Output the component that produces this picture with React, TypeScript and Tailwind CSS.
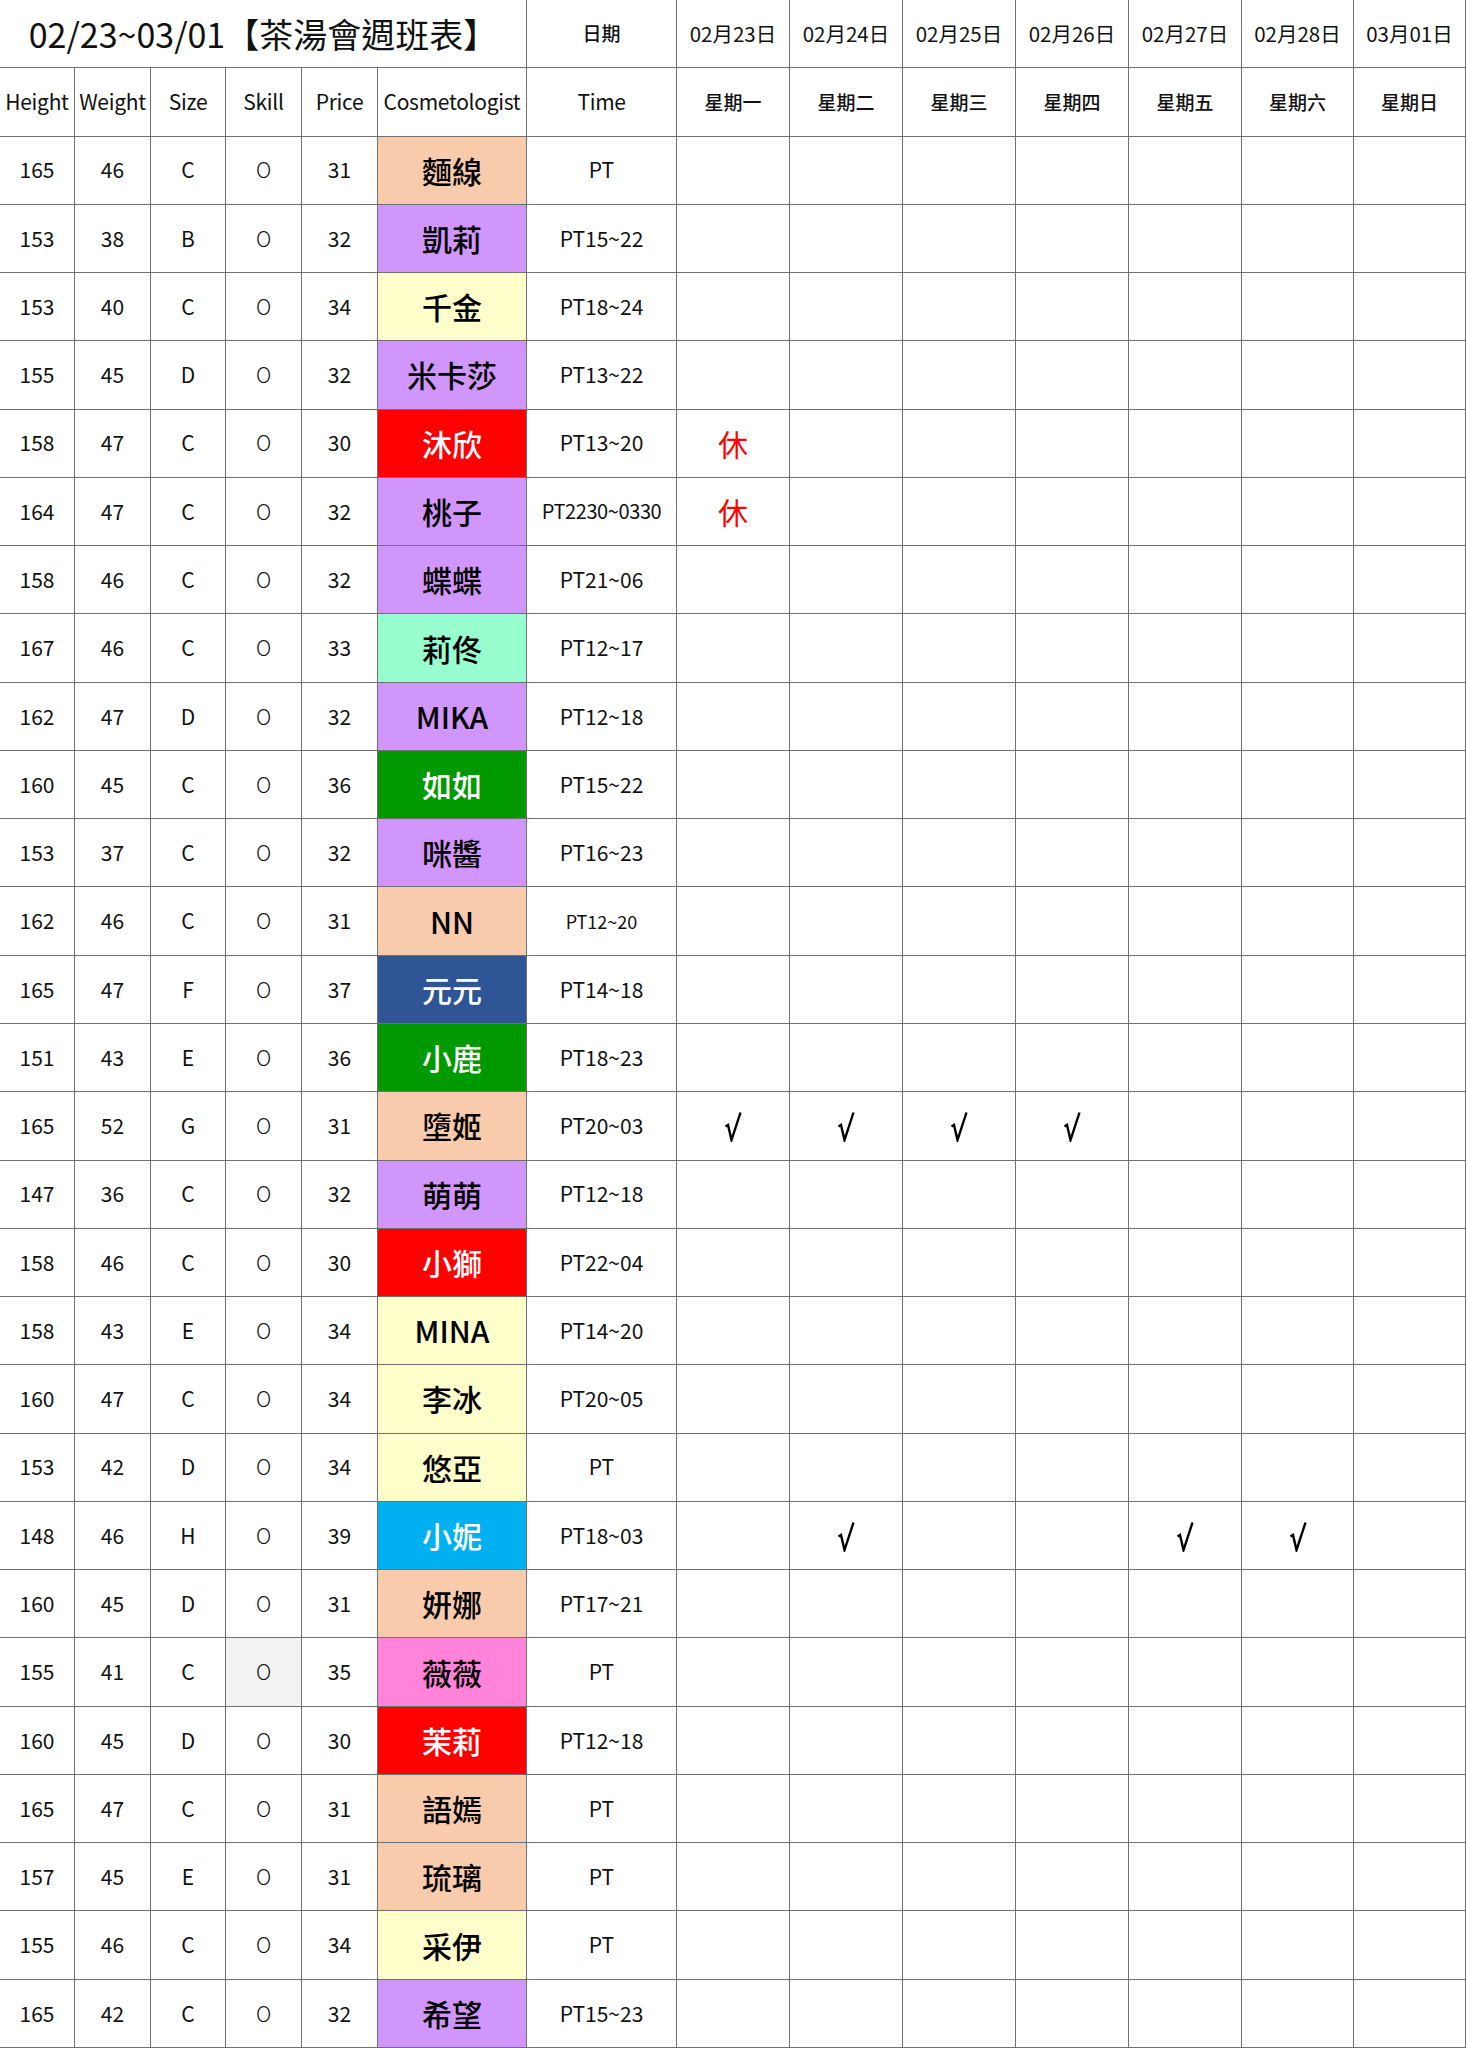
import React from "react";

type Row = {
  h: number;
  w: number;
  size: string;
  price: number;
  name: string;
  color: string;
  time: string;
  marks?: Record<number, string>;
  skillBg?: boolean;
  smallTime?: boolean;
};

// background + text colour for the name cell
const colors: Record<string, string> = {
  peach: "bg-[#f8cbad] text-black",
  purple: "bg-[#d196fb] text-black",
  yellow: "bg-[#ffffcc] text-black",
  red: "bg-[#ff0000] text-white",
  mint: "bg-[#99fecf] text-black",
  green: "bg-[#009900] text-white",
  blue: "bg-[#2f5597] text-white",
  cyan: "bg-[#00b0f0] text-white",
  pink: "bg-[#ff83d8] text-black",
};

const rows: Row[] = [
  { h: 165, w: 46, size: "C", price: 31, name: "麵線", color: "peach", time: "PT" },
  { h: 153, w: 38, size: "B", price: 32, name: "凱莉", color: "purple", time: "PT15~22" },
  { h: 153, w: 40, size: "C", price: 34, name: "千金", color: "yellow", time: "PT18~24" },
  { h: 155, w: 45, size: "D", price: 32, name: "米卡莎", color: "purple", time: "PT13~22" },
  { h: 158, w: 47, size: "C", price: 30, name: "沐欣", color: "red", time: "PT13~20", marks: { 0: "休" } },
  { h: 164, w: 47, size: "C", price: 32, name: "桃子", color: "purple", time: "PT2230~0330", marks: { 0: "休" } },
  { h: 158, w: 46, size: "C", price: 32, name: "蝶蝶", color: "purple", time: "PT21~06" },
  { h: 167, w: 46, size: "C", price: 33, name: "莉佟", color: "mint", time: "PT12~17" },
  { h: 162, w: 47, size: "D", price: 32, name: "MIKA", color: "purple", time: "PT12~18" },
  { h: 160, w: 45, size: "C", price: 36, name: "如如", color: "green", time: "PT15~22" },
  { h: 153, w: 37, size: "C", price: 32, name: "咪醬", color: "purple", time: "PT16~23" },
  { h: 162, w: 46, size: "C", price: 31, name: "NN", color: "peach", time: "PT12~20", smallTime: true },
  { h: 165, w: 47, size: "F", price: 37, name: "元元", color: "blue", time: "PT14~18" },
  { h: 151, w: 43, size: "E", price: 36, name: "小鹿", color: "green", time: "PT18~23" },
  { h: 165, w: 52, size: "G", price: 31, name: "墮姬", color: "peach", time: "PT20~03", marks: { 0: "√", 1: "√", 2: "√", 3: "√" } },
  { h: 147, w: 36, size: "C", price: 32, name: "萌萌", color: "purple", time: "PT12~18" },
  { h: 158, w: 46, size: "C", price: 30, name: "小獅", color: "red", time: "PT22~04" },
  { h: 158, w: 43, size: "E", price: 34, name: "MINA", color: "yellow", time: "PT14~20" },
  { h: 160, w: 47, size: "C", price: 34, name: "李冰", color: "yellow", time: "PT20~05" },
  { h: 153, w: 42, size: "D", price: 34, name: "悠亞", color: "yellow", time: "PT" },
  { h: 148, w: 46, size: "H", price: 39, name: "小妮", color: "cyan", time: "PT18~03", marks: { 1: "√", 4: "√", 5: "√" } },
  { h: 160, w: 45, size: "D", price: 31, name: "妍娜", color: "peach", time: "PT17~21" },
  { h: 155, w: 41, size: "C", price: 35, name: "薇薇", color: "pink", time: "PT", skillBg: true },
  { h: 160, w: 45, size: "D", price: 30, name: "茉莉", color: "red", time: "PT12~18" },
  { h: 165, w: 47, size: "C", price: 31, name: "語嫣", color: "peach", time: "PT" },
  { h: 157, w: 45, size: "E", price: 31, name: "琉璃", color: "peach", time: "PT" },
  { h: 155, w: 46, size: "C", price: 34, name: "采伊", color: "yellow", time: "PT" },
  { h: 165, w: 42, size: "C", price: 32, name: "希望", color: "purple", time: "PT15~23" },
];

const dates = ["02月23日", "02月24日", "02月25日", "02月26日", "02月27日", "02月28日", "03月01日"];
const weekdays = ["星期一", "星期二", "星期三", "星期四", "星期五", "星期六", "星期日"];

const cell = "flex items-center justify-center border-r border-b border-[#707070] overflow-hidden whitespace-nowrap";

// the spreadsheet's check mark: short tick on the left, tall stroke up to the right
function Check() {
  return (
    <svg width="18" height="31" viewBox="0 0 18 31" fill="none" className="mt-[2px]">
      <path d="M1.5 15.5 L4 14 L7.5 29 L16.5 1.5" stroke="#000" strokeWidth="2.4" strokeLinejoin="miter" />
    </svg>
  );
}

export default function App() {
  return (
    <div
      className="w-[1466px] h-[2048px] bg-white text-[#111] grid grid-cols-[75px_76px_75px_76px_76px_149px_150px_113px_113px_113px_113px_113px_112px_112px] grid-rows-[repeat(30,minmax(0,1fr))]"
      style={{ fontFamily: '"Noto Sans CJK TC", "Noto Sans", sans-serif' }}
    >
      <div className={`${cell} col-span-6 text-[34px]`}>02/23~03/01【茶湯會週班表】</div>
      <div className={`${cell} text-[19px] font-medium`}>日期</div>
      {dates.map((d) => (
        <div key={d} className={`${cell} text-[20.5px]`}>
          {d}
        </div>
      ))}

      {["Height", "Weight", "Size", "Skill", "Price", "Cosmetologist", "Time"].map((h) => (
        <div key={h} className={`${cell} text-[21px] tracking-[-0.3px]`}>
          {h}
        </div>
      ))}
      {weekdays.map((d) => (
        <div key={d} className={`${cell} text-[19px] font-medium`}>
          {d}
        </div>
      ))}

      {rows.map((r, i) => (
        <React.Fragment key={i}>
          <div className={`${cell} text-[21px]`}>{r.h}</div>
          <div className={`${cell} text-[21px]`}>{r.w}</div>
          <div className={`${cell} text-[21px]`}>{r.size}</div>
          <div className={`${cell} text-[21px] font-light ${r.skillBg ? "bg-[#f2f2f2]" : ""}`}>O</div>
          <div className={`${cell} text-[21px]`}>{r.price}</div>
          <div className={`${cell} text-[30px] font-medium ${colors[r.color]}`}>{r.name}</div>
          <div className={`${cell} ${r.smallTime ? "text-[18px]" : r.time.length > 8 ? "text-[20px] tracking-[-0.4px]" : "text-[21px]"}`}>
            {r.time}
          </div>
          {dates.map((_, j) => {
            const m = r.marks?.[j];
            return (
              <div key={j} className={`${cell} text-[30px] text-[#ff0000]`}>
                {m === "√" ? <Check /> : m ?? ""}
              </div>
            );
          })}
        </React.Fragment>
      ))}
    </div>
  );
}
